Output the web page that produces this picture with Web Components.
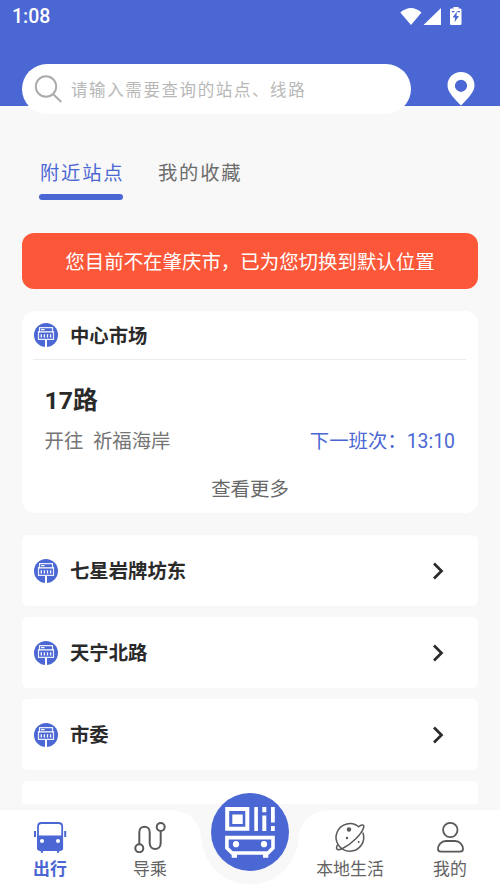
<!DOCTYPE html>
<html lang="zh-CN">
<head>
<meta charset="utf-8">
<title>出行</title>
<style>
html,body{margin:0;padding:0}
body{width:500px;height:888px;overflow:hidden;background:#f8f8f8;font-family:Roboto,"Noto Sans CJK SC",sans-serif;color:#2a2a2a}
</style>
</head>
<body>
<transit-app></transit-app>
<script>
const define = (name, html) => {
  const tpl = document.createElement('template');
  tpl.innerHTML = html;
  customElements.define(name, class extends HTMLElement {
    constructor() {
      super();
      this.attachShadow({mode: 'open'}).append(tpl.content.cloneNode(true));
    }
  });
};

define('status-bar', `<style>
:host{display:flex;height:34px;justify-content:space-between;align-items:center;padding:0 38px 0 12px;box-sizing:border-box;color:#fff;font-size:19.500px;font-weight:500;line-height:34px}
svg{display:block}
</style><span>1:08</span>
<svg width="62" height="20" viewBox="400 7 62 20" fill="#fff">
<path d="M400.3 12.5Q411 3.500 421.500 12.500L411 25Z"/><path d="M441 8V25H423.500Z"/>
<path d="M453.500 8.500V7H458.500V8.500H460.200Q461.500 8.500 461.500 9.800V23.700Q461.500 25 460.200 25H451.300Q450 25 450 23.700V9.800Q450 8.500 451.300 8.500Z"/>
<path d="M457 11.500L452.500 17.500H455L454.700 22L459 16H456.500ZM451.800 11H454.500V12.200H451.800ZM457.300 11H460V12.200H457.300Z" fill="#4b67d3"/>
</svg>`);

define('search-field', `<style>
:host{display:flex;width:389px;height:50px;border-radius:25px;background:#fff;align-items:center;box-sizing:border-box;padding-left:12px;color:#b8b8b8;font-size:16.500px;letter-spacing:1.600px}
svg{margin-right:8px;flex:none}
span{line-height:24px;white-space:nowrap;padding-top:3px}
</style><svg width="29" height="30" viewBox="0 0 29 30" fill="none" stroke="#aaa" stroke-width="1.900"><circle cx="12" cy="12.500" r="10.200"/><path d="M19 20L27.300 28"/></svg><span><slot></slot></span>`);

define('app-header', `<style>
:host{display:block;height:106px;background:#4b67d3}
div{display:flex;padding:30px 0 0 22px;align-items:center}
svg{margin-left:36px}
</style><status-bar></status-bar>
<div><search-field>请输入需要查询的站点、线路</search-field>
<svg width="28" height="34" viewBox="0 0 28 34"><path fill="#fff" fill-rule="evenodd" d="M14 0C6.400 0 .5 5.900.5 13.300C.5 20 6.500 26 14 33.500C21.500 26 27.500 20 27.500 13.300C27.500 5.900 21.600 0 14 0ZM14 7.700A6.100 6.100 0 1 1 14 19.900A6.100 6.100 0 1 1 14 7.700Z"/></svg></div>`);

define('tab-item', `<style>
:host{display:block;width:84px;height:40px;color:#6c6c6c;font-size:19.300px;letter-spacing:1.800px;line-height:28px;white-space:nowrap}
span{display:block;padding-left:1px}
i{display:none;height:6px;border-radius:3px;background:#4b67d3;margin-top:6px}
:host([active]){color:#4b67d3}
:host([active]) i{display:block}
</style><span><slot></slot></span><i></i>`);

define('notice-banner', `<style>
:host{display:flex;height:56px;border-radius:12px;background:#fc5739;color:#fff;font-size:19.450px;align-items:center;justify-content:center;white-space:nowrap;padding-bottom:2px;box-sizing:border-box}
</style><slot></slot>`);

define('stop-title', `<style>
:host{display:flex;align-items:center;font-size:19.350px;font-weight:700;line-height:28px;color:#2a2a2a;height:28px}
svg{margin-right:12px}
span{padding-top:3px}
</style><svg width="24" height="24" viewBox="0 0 24 24"><circle cx="12" cy="12" r="12" fill="#4b67d3"/>
<path d="M12 16V24" stroke="#fff" stroke-width="2"/><path d="M5.500 4.600H18.500V8.600H19.500V16.300H4.500V8.600H5.500Z" fill="none" stroke="#e7ebfa" stroke-width="1.200"/>
<path d="M5 8.900H19M7 6.700H10.500" stroke="#fff" stroke-width="1.200"/><path d="M7.300 11.200V14.500M10.400 11.200V14.500M13.500 11.200V14.500M16.600 11.200V14.500" stroke="#fff" stroke-width="1.300"/></svg><span><slot></slot></span>`);

define('stop-card', `<style>
:host{display:block;height:202px;box-sizing:border-box;background:#fff;border-radius:13px;padding:10px 12px 0;font-size:19.400px;line-height:28px;color:#757575}
hr{border:0;height:1px;background:#ececec;margin:10px 0 0 -1px}
h2{font-size:24.800px;line-height:36px;font-weight:700;color:#2a2a2a;margin:23px 0 0 10.500px}
.line{display:flex;justify-content:space-between;margin:9px 11px 0 10.500px;white-space:pre}
.next{color:#4b67d3}
.more{text-align:center;margin-top:20px;color:#686868}
</style><stop-title><slot name="stop"></slot></stop-title><hr>
<h2><slot name="route"></slot></h2>
<div class="line"><span>开往  <slot name="to"></slot></span><span class="next">下一班次：<slot name="time"></slot></span></div>
<div class="more">查看更多</div>`);

define('stop-row', `<style>
:host{display:flex;height:71px;box-sizing:border-box;background:#fff;border-radius:6px;align-items:center;justify-content:space-between;padding:0 34px 0 12px;flex:none}
</style><stop-title><slot></slot></stop-title>
<svg width="12" height="18" viewBox="0 0 12 18" fill="none" stroke="#2a2a2a" stroke-width="2.700"><path d="M2 1.500L9.500 9L2 16.500"/></svg>`);

define('nav-item', `<style>
:host{display:flex;flex-direction:column;align-items:center;width:100px;color:#626262;font-size:16.900px;line-height:24px;padding-top:11px;box-sizing:border-box}
:host([active]){color:#4b67d3;font-weight:700}
label{margin-top:4px;white-space:nowrap}
</style><slot name="icon"></slot><label><slot></slot></label>`);

define('scan-button', `<style>
:host{display:block;width:78px;height:78px}
svg{display:block}
</style><svg width="78" height="78" viewBox="211 793 78 78"><circle cx="250" cy="832" r="39" fill="#4b67d3"/>
<path d="M227.200 809H247.300V828.800H227.200Z" stroke-width="4" fill="none" stroke="#fff"/>
<path fill="#fff" d="M232.300 814.500H242.700V824H232.300ZM254.300 807H257.900V831H254.300ZM262.300 807H266.300V812.300H262.300ZM262.300 815.500H266.300V831H262.300ZM271 807H274.800V822.500H271ZM271 826H274.800V831H271Z"/>
<path d="M226.900 837.600H273V848L268 853H232L226.900 848Z" fill="none" stroke="#fff" stroke-width="3.600"/>
<circle cx="236" cy="844.200" r="3.100" fill="#fff"/><circle cx="264" cy="844.200" r="3.100" fill="#fff"/><path d="M231.700 853H237V857.700H231.700ZM263 853H268.300V857.700H263Z" fill="#fff"/></svg>`);

define('bottom-nav', `<style>
:host{display:block;position:relative;height:78px}
.bg{position:absolute;inset:0}
nav{position:relative;display:flex}
.gap{width:100px}
scan-button{position:absolute;left:211px;top:-17px}
</style>
<svg class="bg" width="500" height="78" viewBox="0 0 500 78"><path fill="#fff" d="M0 0H168C189 0 199 11 201 26C203 55 224 74.500 250 74.500S297 55 299 26C301 11 311 0 332 0H500V78H0Z"/></svg>
<nav>
<nav-item active><svg slot="icon" width="34" height="32" viewBox="33 821.500 34 32"><path d="M41.500 823.500H58.500Q62.200 823.500 62.200 827V849H38V827Q38 823.500 41.500 823.500Z" fill="#fff" stroke="#4b67d3" stroke-width="1.800"/><path fill="#4b67d3" d="M37.200 836H63V848.500Q63 851.500 60 851.500H40.200Q37.200 851.500 37.200 848.500ZM34 831.500H36V837.500H34ZM64.200 831.500H66.200V837.500H64.200ZM40.800 851H43V853.300H40.800ZM57 851H59.200V853.300H57Z"/><circle cx="42" cy="841.500" r="2" fill="#fff"/><circle cx="58" cy="841.500" r="2" fill="#fff"/></svg>出行</nav-item>
<nav-item><svg slot="icon" width="34" height="32" viewBox="133 821.500 34 32" fill="none" stroke="#595959" stroke-width="2"><circle cx="139.300" cy="848.700" r="4"/><circle cx="160.700" cy="827.500" r="4"/><path d="M139.300 844.500V832.500C139.300 825.500 149.700 825.500 149.700 832.500V843.500C149.700 851.500 160.700 851.500 160.700 843.500V832"/></svg>导乘</nav-item>
<div class="gap"></div>
<nav-item><svg slot="icon" width="34" height="32" viewBox="333 821.500 34 32" fill="none" stroke="#595959" stroke-width="1.500"><path d="M359.300 827.800A13.800 13.800 0 1 0 362.800 833"/><path d="M359 826.800C363 824.500 364.500 825.500 363.500 828.500C361.500 834.500 352 844.500 342.500 849C338 851 335.500 850.500 337 846.500L337.700 845.200"/><g fill="#595959" stroke="none"><circle cx="349" cy="830" r="2.200"/><circle cx="347" cy="838.500" r="1.200"/><circle cx="358.700" cy="842.500" r="1"/></g></svg>本地生活</nav-item>
<nav-item><svg slot="icon" width="34" height="32" viewBox="433 821.500 34 32" fill="none" stroke="#595959" stroke-width="1.800"><circle cx="450.300" cy="830.500" r="7.200"/><path d="M446 841.500H455C460 841.500 463 846 463 849.500Q463 852.200 460 852.200H441Q438 852.200 438 849.500C438 846 441 841.500 446 841.500Z"/></svg>我的</nav-item>
</nav><scan-button></scan-button>`);

define('transit-app', `<style>
:host{display:flex;flex-direction:column;width:500px;height:888px;overflow:hidden;background:#f8f8f8}
.tabs{display:flex;gap:34px;padding:54px 0 0 39px}
main{display:flex;flex-direction:column;height:571px;box-sizing:border-box;padding:0 22px;margin-top:33px;overflow:hidden;flex:none}
stop-card{margin-top:22px;flex:none}
notice-banner{flex:none}
.rows{display:flex;flex-direction:column;gap:11px;margin-top:22px}
bottom-nav{margin-top:6px;flex:none}
app-header{flex:none}
</style>
<app-header></app-header>
<div class="tabs"><tab-item active>附近站点</tab-item><tab-item>我的收藏</tab-item></div>
<main>
<notice-banner>您目前不在肇庆市，已为您切换到默认位置</notice-banner>
<stop-card><span slot="stop">中心市场</span><span slot="route">17路</span><span slot="to">祈福海岸</span><span slot="time">13:10</span></stop-card>
<div class="rows"><stop-row>七星岩牌坊东</stop-row><stop-row>天宁北路</stop-row><stop-row>市委</stop-row><stop-row></stop-row></div>
</main>
<bottom-nav></bottom-nav>`);
</script>
</body>
</html>
